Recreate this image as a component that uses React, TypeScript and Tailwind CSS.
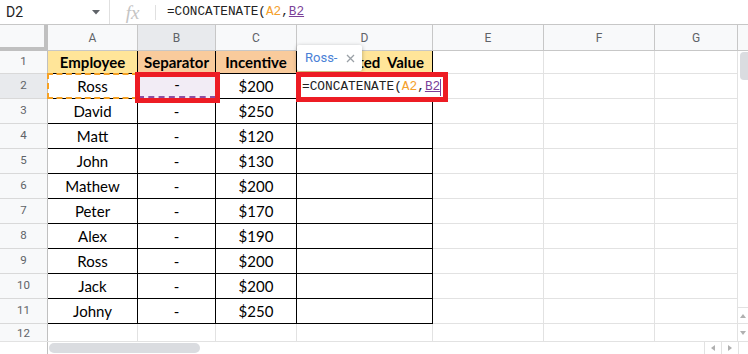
import React from "react";

const COLS = [
  { w: 90, l: "A" },
  { w: 78, l: "B" },
  { w: 81, l: "C" },
  { w: 136, l: "D" },
  { w: 111, l: "E" },
  { w: 111, l: "F" },
  { w: 83, l: "G" },
];

const DATA: [string, string, string][] = [
  ["Ross", "-", "$200"],
  ["David", "-", "$250"],
  ["Matt", "-", "$120"],
  ["John", "-", "$130"],
  ["Mathew", "-", "$200"],
  ["Peter", "-", "$170"],
  ["Alex", "-", "$190"],
  ["Ross", "-", "$200"],
  ["Jack", "-", "$200"],
  ["Johny", "-", "$250"],
];

const BLACK = "border-r border-b border-black";
const GRAY = "border-r border-b border-[#e2e2e2]";
const LATO = { fontFamily: "Lato, 'Open Sans', sans-serif" };

function RowHeader({ n, h, active }: { n: number; h: string; active?: boolean }) {
  return (
    <div
      className={`${h} w-[48px] shrink-0 flex items-center justify-center border-r border-b border-r-[#c0c0c0] border-b-[#d9d9d9] text-[11.5px] text-[#5f6368] ${
        active ? "bg-[#e8eaed]" : "bg-[#f8f9fa]"
      }`}
      style={{ fontFamily: "Roboto, sans-serif" }}
    >
      {n}
    </div>
  );
}

export default function App() {
  return (
    <div className="relative w-[748px] h-[354px] overflow-hidden bg-white">
      {/* Formula bar */}
      <div
        className="flex h-[25px] items-center border-b border-[#c7c7c7]"
        style={{ fontFamily: "Roboto, sans-serif" }}
      >
        <div className="flex w-[110px] h-full items-center justify-between pl-[6px] pr-[9px] border-r border-[#e0e0e0]">
          <span className="text-[14px] text-[#222]">D2</span>
          <svg width="8" height="5" viewBox="0 0 8 5">
            <path d="M0 0 L8 0 L4 4.5 Z" fill="#5f6368" />
          </svg>
        </div>
        <div className="flex w-[46px] h-[15px] items-center justify-center border-r border-[#e0e0e0]">
          <span
            className="italic text-[19px] text-[#c4c4c4] leading-none"
            style={{ fontFamily: "'Liberation Serif', serif" }}
          >
            fx
          </span>
        </div>
        <div
          className="pl-[11px] text-[12.7px] text-[#222] whitespace-pre"
          style={{ fontFamily: "'Liberation Mono', monospace" }}
        >
          =CONCATENATE(<span className="text-[#f4a02c]">A2</span>,
          <span className="text-[#7b3f98] underline">B2</span>
        </div>
      </div>

      <div className="flex h-[316px]">
        {/* grid */}
        <div className="w-[738px] flex flex-col">
          {/* column header */}
          <div className="flex h-[26px]">
            <div className="w-[48px] h-[26px] shrink-0 bg-[#f8f9fa] border-r-4 border-b-4 border-[#c0c0c0]" />
            {COLS.map((c) => (
              <div
                key={c.l}
                style={{ width: c.w, fontFamily: "Roboto, sans-serif" }}
                className={`shrink-0 flex items-center justify-center border-r border-b border-[#c7c7c7] text-[12px] text-[#5f6368] ${
                  c.l === "B" ? "bg-[#e8eaed]" : "bg-[#f8f9fa]"
                }`}
              >
                {c.l}
              </div>
            ))}
          </div>

          {/* row 1 */}
          <div className="flex h-[23px]">
            <RowHeader n={1} h="h-[23px]" />
            <div style={{ width: 90, ...LATO }} className={`shrink-0 ${BLACK} bg-[#ffe599] flex items-center justify-center font-bold text-[15px] text-black`}>
              Employee
            </div>
            <div style={{ width: 78, ...LATO }} className={`shrink-0 ${BLACK} bg-[#f9cb9c] flex items-center justify-center font-bold text-[15px] text-black`}>
              Separator
            </div>
            <div style={{ width: 81, ...LATO }} className={`shrink-0 ${BLACK} bg-[#f9cb9c] flex items-center justify-center font-bold text-[15px] text-black`}>
              Incentive
            </div>
            <div style={{ width: 136, ...LATO }} className={`shrink-0 ${BLACK} bg-[#ffe599] flex items-center justify-end pr-[8px] overflow-hidden font-bold text-[15px] text-black whitespace-pre`}>
              Concatenated  Value
            </div>
            {[111, 111, 83].map((w, i) => (
              <div key={i} style={{ width: w }} className={`shrink-0 ${GRAY}`} />
            ))}
          </div>

          {/* rows 2-11 */}
          {DATA.map((r, i) => (
            <div key={i} className="flex h-[25px]">
              <RowHeader n={i + 2} h="h-[25px]" active={i === 0} />
              {r.map((v, j) => (
                <div
                  key={j}
                  style={{ width: COLS[j].w, ...LATO }}
                  className={`shrink-0 ${BLACK} flex items-center justify-center text-[15px] text-black`}
                >
                  {v}
                </div>
              ))}
              <div style={{ width: 136 }} className={`shrink-0 ${BLACK}`} />
              {[111, 111, 83].map((w, k) => (
                <div key={k} style={{ width: w }} className={`shrink-0 ${GRAY}`} />
              ))}
            </div>
          ))}

          {/* row 12 */}
          <div className="flex h-[17px]">
            <div
              className="h-[17px] w-[48px] shrink-0 flex items-center justify-center border-r border-[#c0c0c0] bg-[#f8f9fa] text-[11.5px] text-[#5f6368] pt-[2px]"
              style={{ fontFamily: "Roboto, sans-serif" }}
            >
              12
            </div>
            {COLS.map((c) => (
              <div key={c.l} style={{ width: c.w }} className="shrink-0 border-r border-[#e2e2e2]" />
            ))}
          </div>
        </div>

        {/* vertical scrollbar */}
        <div className="w-[10px] flex flex-col">
          <div className="h-[26px] bg-[#f8f9fa] border-b border-[#c7c7c7]" />
          <div className="flex-1 pt-[1px] pl-[2px]">
            <div className="w-[8px] h-[28px] rounded-l-[4px] bg-[#dadce0]" />
          </div>
          <div className="h-[16px] border-t border-[#e2e2e2] flex items-center justify-center">
            <svg width="6" height="4" viewBox="0 0 6 4">
              <path d="M0 4 L6 4 L3 0 Z" fill="#b0b0b0" />
            </svg>
          </div>
          <div className="h-[18px] border-t border-[#e2e2e2] flex items-center justify-center">
            <svg width="6" height="4" viewBox="0 0 6 4">
              <path d="M0 0 L6 0 L3 4 Z" fill="#b0b0b0" />
            </svg>
          </div>
        </div>
      </div>

      {/* horizontal scrollbar */}
      <div className="flex h-[13px] border-t border-[#e2e2e2]">
        <div className="w-[48px] shrink-0 border-r border-[#c0c0c0]" />
        <div className="flex-1 pl-[1px] pt-[1px]">
          <div className="w-[151px] h-[10px] rounded-full bg-[#dadce0]" />
        </div>
        <div className="w-[17px] border-l border-[#e2e2e2] flex items-center justify-center">
          <svg width="4" height="6" viewBox="0 0 4 6">
            <path d="M4 0 L4 6 L0 3 Z" fill="#b0b0b0" />
          </svg>
        </div>
        <div className="w-[17px] border-l border-[#e2e2e2] flex items-center justify-center">
          <svg width="4" height="6" viewBox="0 0 4 6">
            <path d="M0 0 L0 6 L4 3 Z" fill="#b0b0b0" />
          </svg>
        </div>
        <div className="w-[10px] border-l border-[#e2e2e2]" />
      </div>

      {/* A2 dashed copy range */}
      <div className="absolute left-[47px] top-[73px] w-[91px] h-[26px] border-2 border-dashed border-[#f6a123]" />
      {/* B2 reference highlight */}
      <div className="absolute left-[138px] top-[73px] w-[78px] h-[25px] bg-[#f2ecf5] border-b-2 border-dashed border-[#8e4fa3] flex items-center justify-center text-[15px] text-black" style={LATO}>
        -
      </div>
      <div className="absolute left-[135px] top-[72px] w-[85px] h-[31px] border-[5px] border-[#ed1c24]" />

      {/* tooltip */}
      <div
        className="absolute left-[297px] top-[45px] w-[65px] h-[26px] bg-white rounded-[2px] shadow-[0_1px_4px_rgba(0,0,0,0.3)] flex items-center pl-[8px] gap-[9px]"
        style={{ fontFamily: "Roboto, sans-serif" }}
      >
        <span className="text-[13px] text-[#4a7fd6]">Ross-</span>
        <svg width="9" height="9" viewBox="0 0 9 9">
          <path d="M1 1 L8 8 M8 1 L1 8" stroke="#9aa0a6" strokeWidth="1.3" />
        </svg>
      </div>

      {/* cell editor */}
      <div className="absolute left-[296px] top-[72px] w-[152px] h-[30px] border-[5px] border-[#ed1c24] bg-white flex items-center pl-[1px]">
        <span
          className="text-[12.8px] leading-[20px] text-[#222] whitespace-pre"
          style={{ fontFamily: "'Liberation Mono', monospace" }}
        >
          =CONCATENATE(<span className="text-[#f4a02c]">A2</span>,<span className="text-[#7b3f98] underline">B2</span>
        </span>
        <div className="w-[1px] h-[17px] bg-[#7b3f98]" />
      </div>
    </div>
  );
}
